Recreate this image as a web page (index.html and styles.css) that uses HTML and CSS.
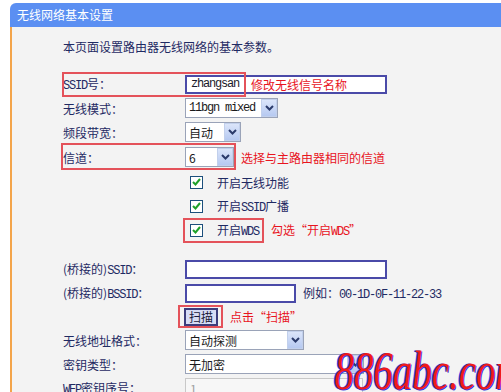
FILE: index.html
```html
<!DOCTYPE html>
<html lang="zh-CN">
<head>
  <meta charset="UTF-8">
  <title>无线网络基本设置</title>
  <link rel="stylesheet" href="styles.css">
</head>
<body>
  <div class="frame">
    <div class="titlebar">无线网络基本设置</div>
    <div class="panel">
      <p class="intro">本页面设置路由器无线网络的基本参数。</p>

      <div class="row">
        <span class="mark mark-ssid"></span>
        <label class="label"><span class="en">SSID</span>号：</label>
        <span class="input input-wide"><span class="en val">zhangsan</span><span class="note">修改无线信号名称</span></span>
      </div>
      <div class="row">
        <label class="label">无线模式：</label>
        <span class="select w-mode"><span class="en val">11bgn mixed</span><span class="arrow"><svg width="9" height="6" viewBox="0 0 9 6"><path d="M1 1l3.5 3.5L8 1" fill="none" stroke="#2b3b6b" stroke-width="2"/></svg></span></span>
      </div>
      <div class="row">
        <label class="label">频段带宽：</label>
        <span class="select w-band"><span class="val">自动</span><span class="arrow"><svg width="9" height="6" viewBox="0 0 9 6"><path d="M1 1l3.5 3.5L8 1" fill="none" stroke="#2b3b6b" stroke-width="2"/></svg></span></span>
      </div>
      <div class="row row-channel">
        <span class="mark mark-channel"></span>
        <label class="label">信道：</label>
        <span class="select w-channel"><span class="val">6</span><span class="arrow"><svg width="9" height="6" viewBox="0 0 9 6"><path d="M1 1l3.5 3.5L8 1" fill="none" stroke="#2b3b6b" stroke-width="2"/></svg></span></span>
        <span class="note">选择与主路由器相同的信道</span>
      </div>

      <div class="row row-check">
        <span class="field"><span class="check"><svg width="9" height="8" viewBox="0 0 9 8"><path d="M1 4l2.5 2.5L8 1" fill="none" stroke="#1fa12a" stroke-width="2"/></svg></span><span>开启无线功能</span></span>
      </div>
      <div class="row row-check">
        <span class="field"><span class="check"><svg width="9" height="8" viewBox="0 0 9 8"><path d="M1 4l2.5 2.5L8 1" fill="none" stroke="#1fa12a" stroke-width="2"/></svg></span><span>开启<span class="en">SSID</span>广播</span></span>
      </div>
      <div class="row row-check">
        <span class="field"><span class="boxed"><span class="check"><svg width="9" height="8" viewBox="0 0 9 8"><path d="M1 4l2.5 2.5L8 1" fill="none" stroke="#1fa12a" stroke-width="2"/></svg></span><span>开启<span class="en">WDS</span></span></span><span class="note">勾选“开启<span class="en">WDS</span>”</span></span>
      </div>

      <div class="row row-bridge">
        <label class="label">(桥接的)<span class="en">SSID</span>：</label>
        <span class="input input-wide"></span>
      </div>
      <div class="row">
        <label class="label">(桥接的)<span class="en">BSSID</span>：</label>
        <span class="input input-short"></span>
        <span class="hint">例如：<span class="en">00-1D-0F-11-22-33</span></span>
      </div>
      <div class="row row-scan">
        <span class="field"><span class="boxed boxed-btn"><button class="btn">扫描</button></span><span class="note">点击“扫描”</span></span>
      </div>
      <div class="row">
        <label class="label">无线地址格式：</label>
        <span class="select w-fmt"><span class="val">自动探测</span><span class="arrow"><svg width="9" height="6" viewBox="0 0 9 6"><path d="M1 1l3.5 3.5L8 1" fill="none" stroke="#2b3b6b" stroke-width="2"/></svg></span></span>
      </div>
      <div class="row">
        <label class="label">密钥类型：</label>
        <span class="select w-key"><span class="val">无加密</span><span class="arrow"><svg width="9" height="6" viewBox="0 0 9 6"><path d="M1 1l3.5 3.5L8 1" fill="none" stroke="#2b3b6b" stroke-width="2"/></svg></span></span>
      </div>
      <div class="row">
        <label class="label"><span class="en">WEP</span>密钥序号：</label>
        <span class="input input-disabled"><span class="val">1</span></span>
      </div>
    </div>
  </div>
  <div class="watermark">886abc.com</div>
</body>
</html>
```
FILE: styles.css
```css
html, body {
  margin: 0;
  height: 100%;
  overflow: hidden;
}
body {
  background: #ffffff;
  font-family: "Noto Sans CJK SC", sans-serif;
  font-size: 12px;
  color: #1f2a63;
  position: relative;
}
.en {
  font-family: "Liberation Mono", monospace;
  font-size: 12px;
  letter-spacing: -1.2px;
}
.frame {
  margin: 3px 0 0 10px;
}
.titlebar {
  height: 24px;
  line-height: 24px;
  padding-left: 7px;
  background: #5b8ff2;
  color: #ffffff;
  border-top-left-radius: 6px;
  font-size: 12px;
}
.panel {
  background: #f3f3f3;
  border-left: 2px solid #f3a44a;
  padding: 12px 0 0 51px;
  height: 400px;
}
.intro {
  margin: 0;
  line-height: 16px;
  height: 33px;
}
.row {
  position: relative;
  display: flex;
  align-items: center;
  height: 24px;
  white-space: nowrap;
}
.row-channel {
  height: 26px;
}
.row-check {
  height: 24px;
}
.row-bridge {
  margin-top: 15px;
}
.row-scan {
  height: 23px;
}
.label {
  width: 122px;
  flex: none;
}
.field {
  display: flex;
  align-items: center;
  margin-left: 122px;
}
.note {
  color: #e8141e;
  margin-left: 7px;
}
.hint {
  margin-left: 7px;
}
.input {
  box-sizing: border-box;
  height: 19px;
  border: 2px solid #4a4aa8;
  background: #ffffff;
  display: flex;
  align-items: center;
  padding-left: 4px;
  flex: none;
}
.input .note {
  margin-left: 12px;
}
.input-wide {
  width: 202px;
}
.input-short {
  width: 111px;
}
.input-disabled {
  width: 178px;
  height: 20px;
  border: 1px solid #c8c8c8;
  background: #f7f7f7;
}
.val {
  color: #1a1a1a;
}
.input .en.val {
  color: #1a1a2a;
}
.input-disabled .val {
  color: #a0a0a0;
}
.select {
  box-sizing: border-box;
  height: 20px;
  border: 1px solid #9aa3b8;
  background: #ffffff;
  display: flex;
  align-items: center;
  justify-content: space-between;
  padding-left: 3px;
  flex: none;
}
.arrow {
  width: 16px;
  height: 18px;
  box-sizing: border-box;
  border: 1px solid #c2d0ec;
  background: linear-gradient(#dbe5fa, #b6c9f1);
  display: flex;
  align-items: center;
  justify-content: center;
}
.w-mode { width: 93px; }
.w-band { width: 56px; }
.w-channel { width: 49px; }
.w-fmt { width: 119px; }
.w-key { width: 179px; }
.check {
  width: 13px;
  height: 13px;
  box-sizing: border-box;
  border: 1px solid #1c4f7c;
  background: #ffffff;
  display: inline-flex;
  align-items: center;
  justify-content: center;
  margin: 0 14px 0 5px;
}
.boxed {
  display: inline-flex;
  align-items: center;
  border: 2px solid #e4525a;
  height: 25px;
  box-sizing: border-box;
  padding-right: 3px;
  margin-left: -2px;
}
.boxed .check {
  margin-left: 5px;
}
.boxed-btn {
  margin-left: -7px;
  height: 23px;
  padding: 0 3px 0 4px;
}
.btn {
  font-family: "Noto Sans CJK SC", sans-serif;
  font-size: 12px;
  color: #1a1a3a;
  height: 18px;
  width: 34px;
  padding: 0;
  border: 2px solid #3c3c7c;
  background: #d7dcf5;
  line-height: 14px;
}
.mark {
  position: absolute;
  border: 2px solid #e4525a;
  box-sizing: border-box;
}
.mark-ssid {
  left: -1px;
  top: 0;
  width: 184px;
  height: 25px;
}
.mark-channel {
  left: -2px;
  top: -1px;
  width: 175px;
  height: 27px;
}
.watermark {
  position: absolute;
  right: -22px;
  bottom: -10px;
  font-family: "Liberation Serif", serif;
  font-style: italic;
  font-size: 54px;
  color: #ef1b1b;
  text-shadow: -2px 0 #2f3be0, 1px 1px #2f3be0;
  transform: scaleX(0.72);
  transform-origin: right bottom;
}
```
